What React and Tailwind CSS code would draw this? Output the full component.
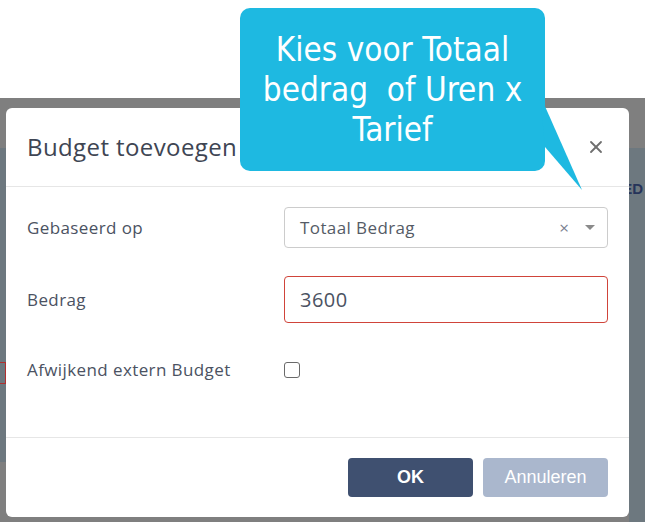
import { X } from 'lucide-react';

const muli = { fontFamily: '"Open Sans", Lato, sans-serif' };

function Callout() {
  return (
    <>
      <div
        className="absolute left-[240px] top-[8px] w-[305px] h-[163px] rounded-[10px] bg-[#1eb9e1] pt-[22px] text-center text-[33px] leading-[40px] text-white"
        style={{ fontFamily: '"DejaVu Sans Condensed", "Open Sans", sans-serif' }}
      >
        <div>Kies voor Totaal</div>
        <div className="whitespace-pre">bedrag  of Uren x</div>
        <div>Tarief</div>
      </div>
      <svg className="absolute left-[540px] top-[90px]" width="50" height="105" viewBox="0 0 50 105">
        <polygon points="0,5 42,100 5,57" fill="#1eb9e1" />
      </svg>
    </>
  );
}

function Field({ label, children, className = '' }) {
  return (
    <div className={`flex items-center ${className}`}>
      <div className="w-[257px] shrink-0 text-[17px] tracking-[0.4px] text-[#4b5262]">{label}</div>
      <div className="flex-1">{children}</div>
    </div>
  );
}

export default function App() {
  return (
    <div className="relative flex h-[522px] w-[645px] flex-col overflow-hidden bg-white" style={muli}>
      <div className="h-[98px] shrink-0 bg-white" />
      <div className="h-[50px] shrink-0 bg-[#7f7f7f]" />
      <div className="relative h-[314px] shrink-0 bg-[#6d787f]">
        <div className="absolute right-[2px] top-[30px] text-[15px] font-bold text-[#26345a]" style={{ fontFamily: '"Liberation Sans", sans-serif' }}>ED</div>
        <div className="absolute left-[-20px] top-[214px] h-[22px] w-[26px] border border-[#b03030]" />
      </div>
      <div className="flex flex-1">
        <div className="flex-1 bg-[#7f7f7f]" />
        <div className="w-[16px] bg-[#6d787f]" />
      </div>

      <div className="absolute left-[6px] top-[108px] flex h-[409px] w-[623px] flex-col rounded-md bg-white">
        <div className="flex h-[79px] shrink-0 items-center justify-between border-b border-[#e6e6e6] pl-[21px] pr-[23px]">
          <h2 className="text-[24px] tracking-[0.4px] text-[#3e4553]">Budget toevoegen</h2>
          <X className="h-[20px] w-[20px] text-[#6f6f6f]" strokeWidth={2.2} />
        </div>

        <div className="flex-1 px-[21px] pt-[20px]">
          <Field label="Gebaseerd op">
            <div className="flex h-[41px] items-center rounded border border-[#cccccc] pl-[15px] pr-[12px]">
              <span className="flex-1 text-[17px] tracking-[0.4px] text-[#555b66]">Totaal Bedrag</span>
              <span className="mr-[16px] text-[17px] leading-none text-[#7a8090]">×</span>
              <svg width="10" height="6" viewBox="0 0 10 6">
                <polygon points="0,0 10,0 5,5" fill="#8a8a8a" />
              </svg>
            </div>
          </Field>
          <Field label="Bedrag" className="mt-[28px]">
            <div className="flex h-[47px] items-center rounded border border-[#d0443a] pl-[15px] text-[20px] tracking-[0.5px] text-[#4b5262]">
              3600
            </div>
          </Field>
          <Field label="Afwijkend extern Budget" className="mt-[32px] h-[30px]">
            <div className="h-[16px] w-[16px] rounded-[3px] border border-[#6a6a6a]" />
          </Field>
        </div>

        <div className="flex h-[80px] shrink-0 items-center justify-end gap-[10px] border-t border-[#e6e6e6] pr-[21px]" style={{ fontFamily: '"Liberation Sans", Arial, sans-serif' }}>
          <button className="h-[39px] w-[125px] rounded bg-[#3f5070] text-[18px] font-bold text-white">OK</button>
          <button className="h-[39px] w-[125px] rounded bg-[#aab7cd] text-[18px] text-white">Annuleren</button>
        </div>
      </div>

      <Callout />
    </div>
  );
}
